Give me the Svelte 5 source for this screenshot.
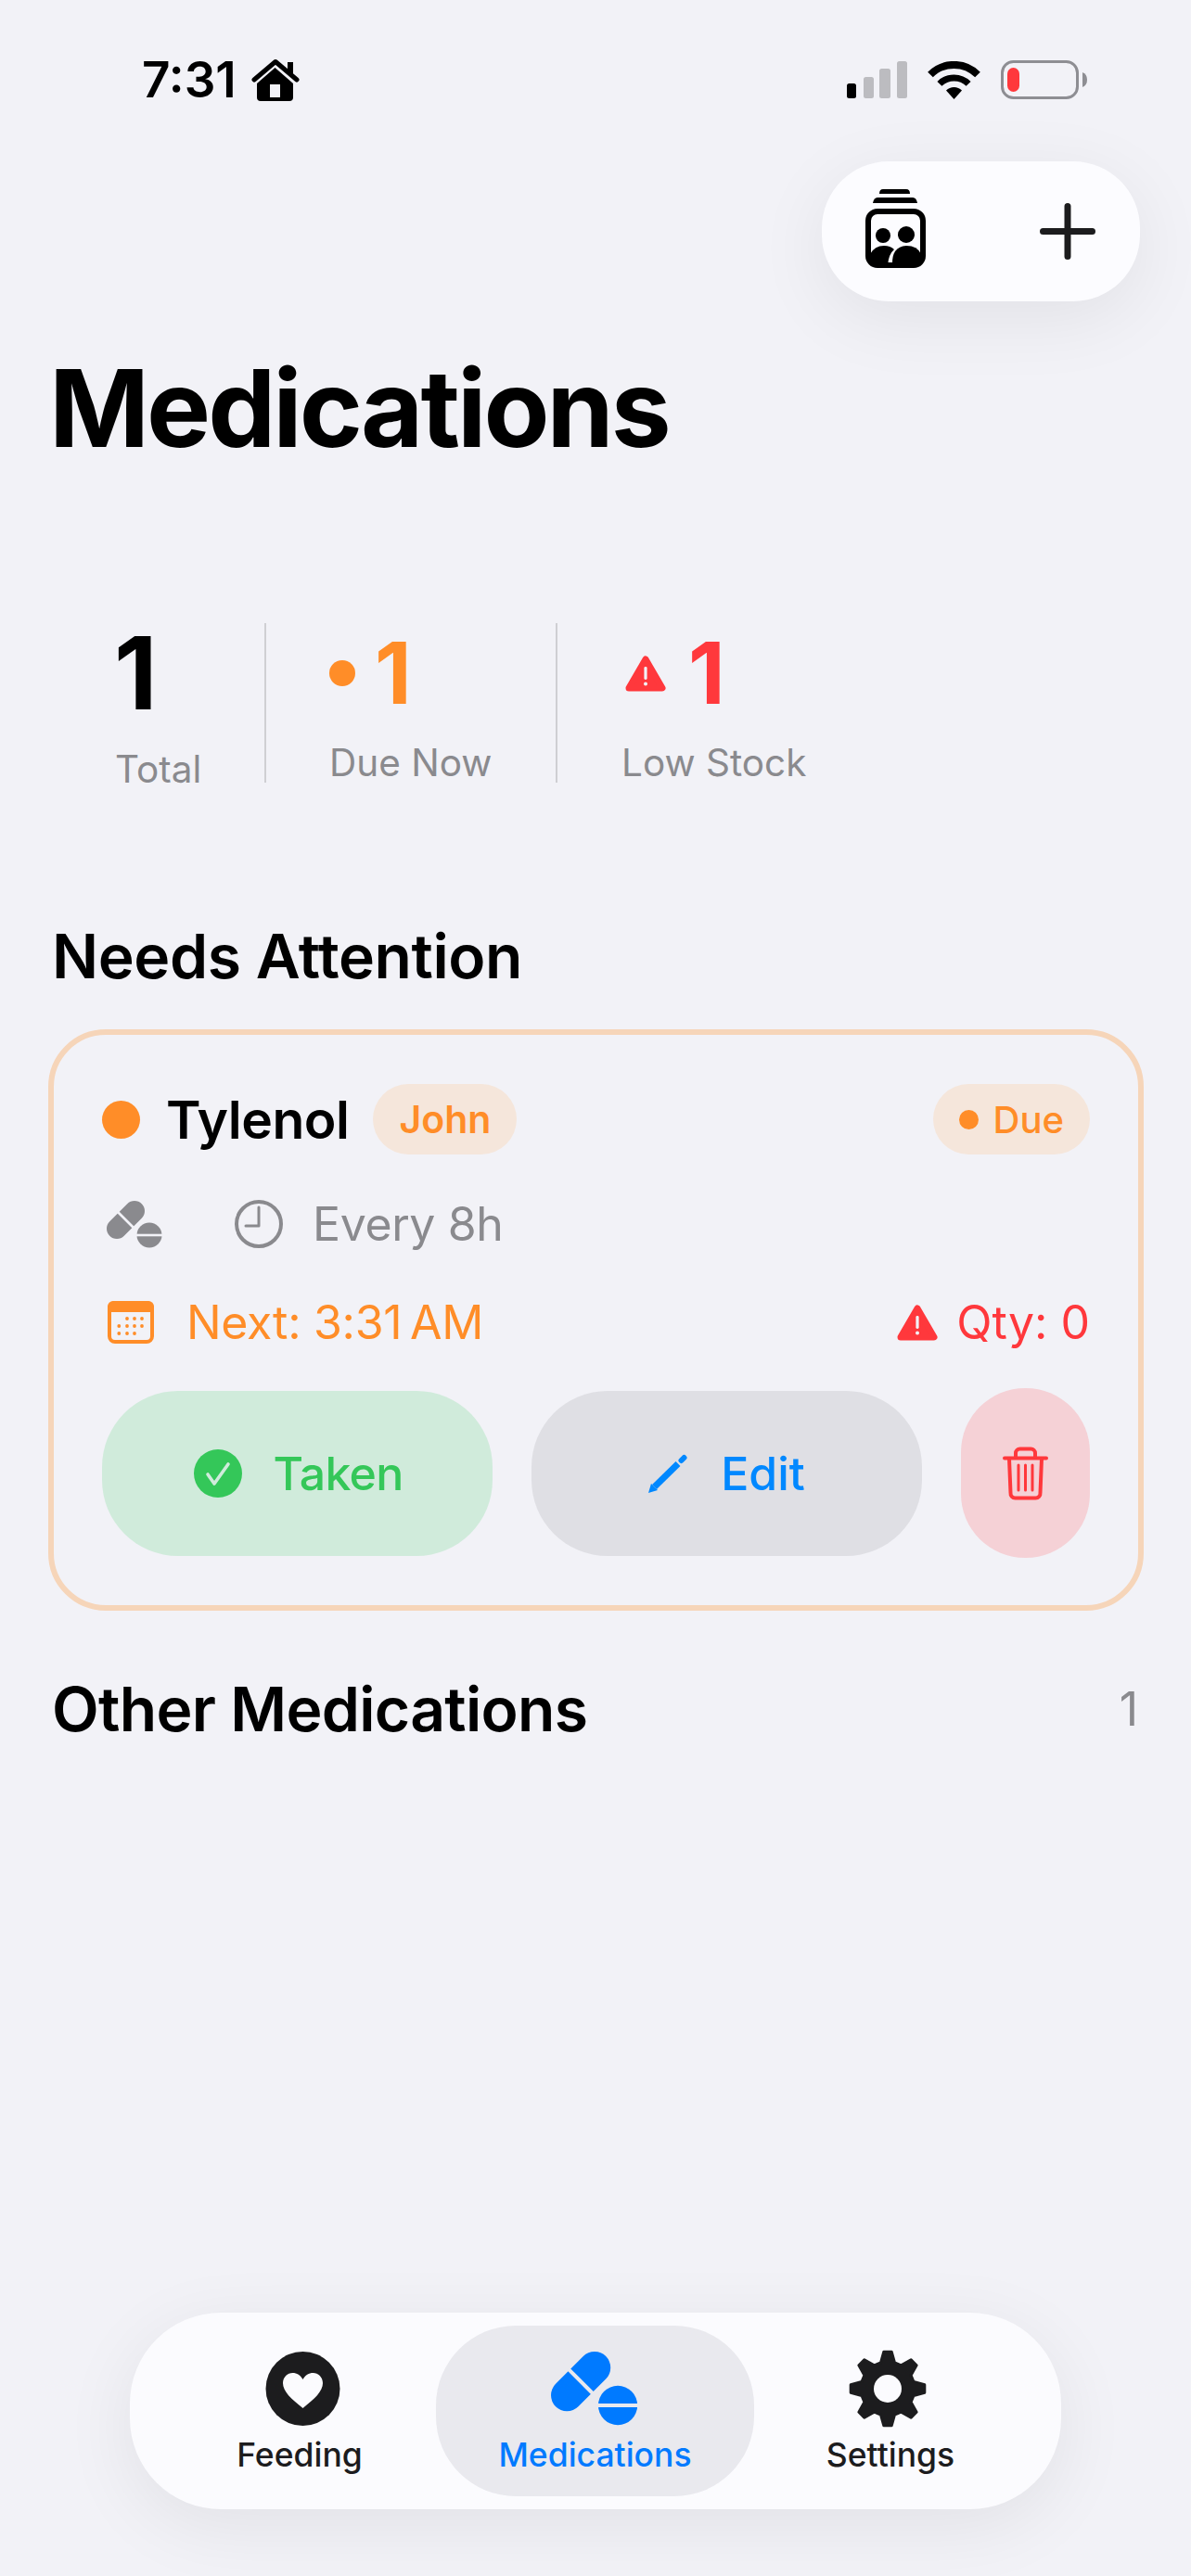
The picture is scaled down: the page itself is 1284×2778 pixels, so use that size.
<script>
  // 8 tooth gear, centred on 42,42
  const gearPath = (() => {
    const pts = [];
    for (let i = 0; i < 8; i++) {
      const a = (i * 45 - 90) * Math.PI / 180;
      const at = (r, off) => {
        const t = a + off * Math.PI / 180;
        return `${(42 + r * Math.cos(t)).toFixed(1)} ${(42 + r * Math.sin(t)).toFixed(1)}`;
      };
      pts.push(at(29, -15), at(40, -6), at(40, 6), at(29, 15));
    }
    return 'M' + pts.join('L') + 'Z';
  })();

  const stats = [
    { label: 'Due Now', kind: 'due', value: 1 },
    { label: 'Low Stock', kind: 'low', value: 1 }
  ];

  const nextDose = 'Next: 3:31\u202FAM';
</script>

{#snippet warn()}
  <svg class="warn" viewBox="0 0 44 39">
    <path d="M22 4L40 35H4Z" fill="#ff383c" stroke="#ff383c" stroke-width="7" stroke-linejoin="round" />
    <rect x="20.4" y="12" width="3.2" height="14" rx="1.4" fill="#f2f2f7" />
    <circle cx="22" cy="30.5" r="2" fill="#f2f2f7" />
  </svg>
{/snippet}

{#snippet pills()}
  <svg class="pills" viewBox="0 0 60 51">
    <path class="pill-body" d="M11 30L30 11" stroke-width="22" stroke-linecap="round" fill="none" />
    <path class="pill-gap" d="M8.5 8.5L32.5 32.5" stroke-width="2.6" fill="none" />
    <circle class="pill-fill" cx="46" cy="37" r="13.5" />
    <path class="pill-gap" d="M31 37H61" stroke-width="2.6" fill="none" />
  </svg>
{/snippet}

<div class="page">
  <header class="status">
    <div class="clock-side">
      <span class="time">7:31</span>
      <svg class="home" viewBox="0 0 52 47">
        <path d="M39 4h6v14h-6z" />
        <path d="M3 23L26 3.5L49 23" fill="none" stroke="#000" stroke-width="5" stroke-linecap="round" stroke-linejoin="round" />
        <path fill-rule="evenodd" d="M25.5 10L45 27V42a4 4 0 0 1-4 4H10a4 4 0 0 1-4-4V27ZM20 28V42H31V28Z" />
      </svg>
    </div>
    <div class="indicators">
      <svg class="signal" viewBox="0 0 65 40">
        <rect x="0" y="24" width="10" height="16" rx="2.5" fill="#000" />
        <rect x="18" y="17" width="11" height="23" rx="2.5" fill="#bcbcc0" />
        <rect x="35" y="8" width="12" height="32" rx="2.5" fill="#bcbcc0" />
        <rect x="54" y="0" width="11" height="40" rx="2.5" fill="#bcbcc0" />
      </svg>
      <svg class="wifi" viewBox="0 0 57 41">
        <path d="M3 14.5A36 36 0 0 1 54 14.5" fill="none" stroke="#000" stroke-width="8" />
        <path d="M12.9 24.4A22 22 0 0 1 44.1 24.4" fill="none" stroke="#000" stroke-width="7" />
        <path d="M28.5 41L20 31.5A12 12 0 0 1 37 31.5Z" />
      </svg>
      <svg class="battery" viewBox="0 0 93 42">
        <rect x="1.5" y="1.5" width="81" height="39" rx="12" fill="none" stroke="#8e8e93" stroke-width="3" />
        <rect x="7" y="8" width="13" height="26" rx="6.5" fill="#ff383c" />
        <path d="M88 13q5 2 5 8t-5 8z" fill="#8e8e93" />
      </svg>
    </div>
  </header>

  <div class="top-actions">
    <div class="action-pill">
      <svg class="jar" viewBox="0 0 65 85">
        <path d="M15 5q0-5 4-5h25q4 0 4 5z" />
        <path d="M8 15q1-6 5-6h38q4 0 5 6z" />
        <rect x="3" y="24" width="59" height="58" rx="10" fill="none" stroke="#000" stroke-width="6" />
        <circle cx="19" cy="50" r="8" />
        <circle cx="44" cy="49" r="9" />
        <path d="M5 80V70Q10 61 20 61Q27 61 31 65Q25 70 24 82H5Z" />
        <path d="M29 82Q28 62 44 61Q56 61 60 70V82Z" />
      </svg>
      <svg class="plus" viewBox="0 0 60 61">
        <path d="M30 3.5V57.5M3.5 30.5H56.500" fill="none" stroke="#1c1c1e" stroke-width="7" stroke-linecap="round" />
      </svg>
    </div>
  </div>

  <h1>Medications</h1>

  <section class="stats">
    <div class="stat first">
      <div class="num"><span class="total-num">1</span></div>
      <div class="lbl">Total</div>
    </div>
    {#each stats as s}
      <div class="stat {s.kind}">
        <div class="num">
          {#if s.kind === 'due'}
            <span class="due-dot"></span>
          {:else}
            {@render warn()}
          {/if}
          <span>{s.value}</span>
        </div>
        <div class="lbl">{s.label}</div>
      </div>
    {/each}
  </section>

  <h2 class="attention">Needs Attention</h2>

  <article class="card">
    <div class="row head">
      <span class="dot"></span>
      <span class="name">Tylenol</span>
      <span class="tag john">John</span>
      <span class="tag due-tag"><i></i>Due</span>
    </div>
    <div class="row meta">
      {@render pills()}
      <svg class="clock" viewBox="0 0 52 52">
        <circle cx="26" cy="26" r="24" fill="none" stroke="#8a8a8e" stroke-width="4" />
        <path d="M26 8V28H12" fill="none" stroke="#8a8a8e" stroke-width="3" stroke-linejoin="round" stroke-linecap="round" />
      </svg>
      <span class="every">Every 8h</span>
    </div>
    <div class="row next">
      <svg class="cal" viewBox="0 0 50 46">
        <rect x="2" y="2" width="46" height="42" rx="6" fill="none" stroke="#ff8d28" stroke-width="4" />
        <path d="M0 12V6a6 6 0 0 1 6-6h38a6 6 0 0 1 6 6v6z" fill="#ff8d28" />
        <g fill="#ff8d28">
          <circle cx="21" cy="19" r="1.9" /><circle cx="29" cy="19" r="1.9" /><circle cx="37" cy="19" r="1.9" />
          <circle cx="12.300" cy="27" r="1.9" /><circle cx="21" cy="27" r="1.9" /><circle cx="29" cy="27" r="1.9" /><circle cx="37" cy="27" r="1.9" />
          <circle cx="12.300" cy="35" r="1.9" /><circle cx="21" cy="35" r="1.9" /><circle cx="29" cy="35" r="1.9" />
        </g>
      </svg>
      <span class="next-text">{nextDose}</span>
      <span class="qty">{@render warn()}<span>Qty: 0</span></span>
    </div>
    <div class="actions">
      <button class="btn taken">
        <svg class="check" viewBox="0 0 52 52">
          <circle cx="26" cy="26" r="26" fill="#34c759" />
          <path d="M15 27L22 37L37 16" fill="none" stroke="#d0ebdb" stroke-width="3.600" stroke-linecap="round" stroke-linejoin="round" />
        </svg>
        Taken
      </button>
      <button class="btn edit">
        <svg class="pencil" viewBox="0 0 42 42">
          <path d="M0 42L3 32L10 39Z" fill="#0088ff" />
          <path d="M6.500 35.500L32 10.500" stroke="#0088ff" stroke-width="7" fill="none" />
          <path d="M35.500 7L38.500 4" stroke="#0088ff" stroke-width="6" stroke-linecap="round" fill="none" />
        </svg>
        Edit
      </button>
      <button class="btn trash" aria-label="Delete">
        <svg class="bin" viewBox="0 0 49 58">
          <g fill="none" stroke="#ff383c" stroke-width="4" stroke-linecap="round">
            <path d="M2 12.500H47" />
            <path d="M14 12V7a4.500 4.500 0 0 1 4.500-4.500h12A4.500 4.500 0 0 1 35 7V12" />
            <path d="M7 13L8.500 50a5 5 0 0 0 5 5.500h22a5 5 0 0 0 5-5.500L42 13" />
            <path d="M17 20V47M24.500 20V47M32 20V47" stroke-width="3" />
          </g>
        </svg>
      </button>
    </div>
  </article>

  <div class="other">
    <h2>Other Medications</h2>
    <span class="count">1</span>
  </div>

  <nav class="tabbar">
    <div class="tab">
      <svg class="tab-icon heart" viewBox="0 0 81 80">
        <circle cx="40.500" cy="40" r="40" fill="#1c1c1e" />
        <path d="M40.500 61C28 51 19 43 19 34C19 27.500 24 23 29.500 23C34 23 38 25.500 40.500 30C43 25.500 47 23 51.500 23C57 23 62 27.500 62 34C62 43 53 51 40.500 61Z" fill="#fbfbfe" />
      </svg>
      <span>Feeding</span>
    </div>
    <div class="tab active">
      {@render pills()}
      <span>Medications</span>
    </div>
    <div class="tab">
      <svg class="tab-icon gear" viewBox="0 0 84 84">
        <path d={gearPath} fill="#1c1c1e" stroke="#1c1c1e" stroke-width="3" stroke-linejoin="round" />
        <circle cx="42" cy="42" r="15" fill="#fbfbfe" />
      </svg>
      <span>Settings</span>
    </div>
  </nav>
</div>

<style>
  :global(body) {
    margin: 0;
    background: #f2f2f7;
  }

  .page {
    width: 1284px;
    height: 2778px;
    display: flex;
    flex-direction: column;
    background: #f2f2f7;
    font-family: Inter, "Liberation Sans", sans-serif;
    color: #000;
    overflow: hidden;
  }

  svg {
    display: block;
    flex: none;
  }

  /* status bar */
  .status {
    height: 60px;
    margin-top: 56px;
    padding: 0 112px 0 153px;
    display: flex;
    align-items: center;
    justify-content: space-between;
  }
  .clock-side {
    display: flex;
    align-items: center;
    gap: 16px;
  }
  .time {
    font-size: 53px;
    font-weight: 600;
    line-height: 60px;
    letter-spacing: 0;
  }
  .home {
    width: 52px;
    height: 47px;
  }
  .indicators {
    display: flex;
    align-items: center;
    gap: 22px;
  }
  .signal {
    width: 65px;
    height: 40px;
  }
  .wifi {
    width: 57px;
    height: 41px;
  }
  .battery {
    width: 93px;
    height: 42px;
  }

  .top-actions {
    display: flex;
    justify-content: flex-end;
    padding-right: 55px;
    margin-top: 58px;
  }
  .action-pill {
    width: 343px;
    height: 151px;
    box-sizing: border-box;
    padding: 0 48px 0 47px;
    border-radius: 72px;
    background: #fcfcff;
    box-shadow: 0 18px 80px rgba(0, 0, 0, 0.07);
    display: flex;
    align-items: center;
    justify-content: space-between;
  }
  .jar {
    width: 65px;
    height: 85px;
    margin-top: -6px;
  }
  .plus {
    width: 60px;
    height: 61px;
  }

  h1 {
    margin: 55px 0 0 53px;
    font-size: 116px;
    line-height: 120px;
    font-weight: 700;
    letter-spacing: -3px;
  }

  /* stats strip */
  .stats {
    display: flex;
    margin: 172px 0 0 57px;
    height: 172px;
  }
  .stat {
    display: flex;
    flex-direction: column;
    align-items: flex-start;
    box-sizing: border-box;
  }
  .stat.first {
    width: 230px;
    padding-left: 67px;
    border-right: 2px solid #cfcfd3;
  }
  .stat.due {
    width: 314px;
    padding-left: 68px;
    border-right: 2px solid #cfcfd3;
    gap: 19px;
  }
  .stat.low {
    width: 338px;
    padding-left: 73px;
    gap: 19px;
  }
  .num {
    height: 106px;
    line-height: 106px;
    margin-top: 1px;
    font-size: 92px;
    font-weight: 700;
    display: flex;
    align-items: center;
  }
  .total-num {
    font-size: 108px;
    margin-left: -1px;
  }
  .stat.first .lbl {
    margin-top: 26px;
  }
  .stat.due .num {
    color: #ff8d28;
    gap: 21px;
  }
  .stat.low .num {
    color: #ff383c;
    gap: 24px;
  }
  .stat.low .lbl {
    margin-left: -4px;
  }
  .due-dot {
    width: 28px;
    height: 28px;
    border-radius: 50%;
    background: #ff8d28;
  }
  .warn {
    width: 44px;
    height: 39px;
  }
  .lbl {
    font-size: 40.5px;
    line-height: 50px;
    color: #8a8a8e;
  }

  h2 {
    margin: 0;
    font-size: 66px;
    line-height: 80px;
    font-weight: 600;
    letter-spacing: -0.4px;
  }
  .attention {
    margin: 147px 0 0 56px;
  }

  /* card */
  .card {
    margin: 39px 51px 0 52px;
    height: 627px;
    box-sizing: border-box;
    padding: 53px 52px 51px;
    border: 6px solid #f6d5b9;
    border-radius: 62px;
  }
  .row {
    display: flex;
    align-items: center;
  }
  .head {
    height: 76px;
  }
  .dot {
    width: 41px;
    height: 41px;
    border-radius: 50%;
    background: #ff8d28;
  }
  .name {
    margin-left: 28px;
    font-size: 57px;
    font-weight: 600;
    letter-spacing: -0.5px;
  }
  .tag {
    height: 76px;
    box-sizing: border-box;
    border-radius: 38px;
    background: #f5e6db;
    color: #ff8d28;
    font-size: 40px;
    font-weight: 500;
    display: flex;
    align-items: center;
  }
  .john {
    margin-left: 26px;
    padding: 0 28px;
    font-size: 41px;
    font-weight: 600;
  }
  .due-tag {
    margin-left: auto;
    padding: 0 28px;
    gap: 16px;
    font-weight: 500;
  }
  .due-tag i {
    width: 21px;
    height: 21px;
    border-radius: 50%;
    background: #ff8d28;
  }
  .meta {
    height: 60px;
    margin-top: 45px;
    --pill: #8a8a8e;
    --gap: #f2f2f7;
  }
  .pills {
    width: 60px;
    height: 51px;
  }
  .pill-body {
    stroke: var(--pill);
  }
  .pill-fill {
    fill: var(--pill);
  }
  .pill-gap {
    stroke: var(--gap);
  }
  .meta .pills {
    margin-left: 5px;
  }
  .clock {
    width: 52px;
    height: 52px;
    margin-left: 78px;
  }
  .every {
    margin-left: 32px;
    font-size: 50px;
    letter-spacing: -0.4px;
    color: #8a8a8e;
  }
  .next {
    height: 60px;
    margin-top: 46px;
    font-size: 50px;
  }
  .cal {
    width: 50px;
    height: 46px;
    margin-left: 6px;
  }
  .next-text {
    margin-left: 35px;
    letter-spacing: -0.3px;
    color: #ff8d28;
  }
  .qty {
    margin-left: auto;
    display: flex;
    align-items: center;
    gap: 20px;
    color: #ff383c;
  }
  .actions {
    margin-top: 41px;
    display: flex;
    align-items: center;
    gap: 42px;
  }
  .btn {
    border: 0;
    padding: 0;
    font-family: inherit;
    font-size: 50px;
    font-weight: 500;
    display: flex;
    align-items: center;
    justify-content: center;
  }
  .taken,
  .edit {
    flex: 1;
    height: 178px;
    border-radius: 82px;
  }
  .taken {
    background: #d0ebdb;
    color: #34c759;
    gap: 33px;
    letter-spacing: -0.7px;
  }
  .edit {
    background: #dfdfe4;
    color: #0088ff;
    gap: 36px;
  }
  .trash {
    width: 139px;
    height: 183px;
    border-radius: 69px;
    background: #f5d1d6;
  }
  .check {
    width: 52px;
    height: 52px;
    margin-left: 3px;
  }
  .pencil {
    width: 42px;
    height: 42px;
  }
  .bin {
    width: 49px;
    height: 58px;
  }

  .other {
    margin: 66px 57px 0 56px;
    display: flex;
    align-items: center;
    justify-content: space-between;
  }
  .other h2 {
    letter-spacing: -0.7px;
  }
  .count {
    font-size: 50px;
    color: #8a8a8e;
  }

  /* tab bar */
  .tabbar {
    margin: auto 0 72px 140px;
    width: 1004px;
    height: 212px;
    box-sizing: border-box;
    padding: 14px 37px 14px 36px;
    border-radius: 98px;
    background: #fbfbfe;
    box-shadow: 0 18px 80px rgba(0, 0, 0, 0.07);
    display: grid;
    grid-template-columns: 294px 343px 294px;
  }
  .tab {
    display: flex;
    flex-direction: column;
    align-items: center;
    padding-top: 28px;
    border-radius: 86px;
    font-size: 35.5px;
    font-weight: 500;
    color: #1c1c1e;
  }
  .tab span {
    margin-top: 11px;
    line-height: 42px;
  }
  .tab-icon {
    width: 81px;
    height: 80px;
  }
  .tab-icon.heart {
    margin-left: 7px;
  }
  .tab-icon.gear {
    width: 84px;
    height: 84px;
    margin: -2px 0 -2px -6px;
  }
  .tab.active {
    background: #e9e9ee;
    color: #007aff;
    --pill: #007aff;
    --gap: #e9e9ee;
  }
  .tab.active .pills {
    width: 94px;
    height: 80px;
    margin-left: -2px;
  }
</style>
